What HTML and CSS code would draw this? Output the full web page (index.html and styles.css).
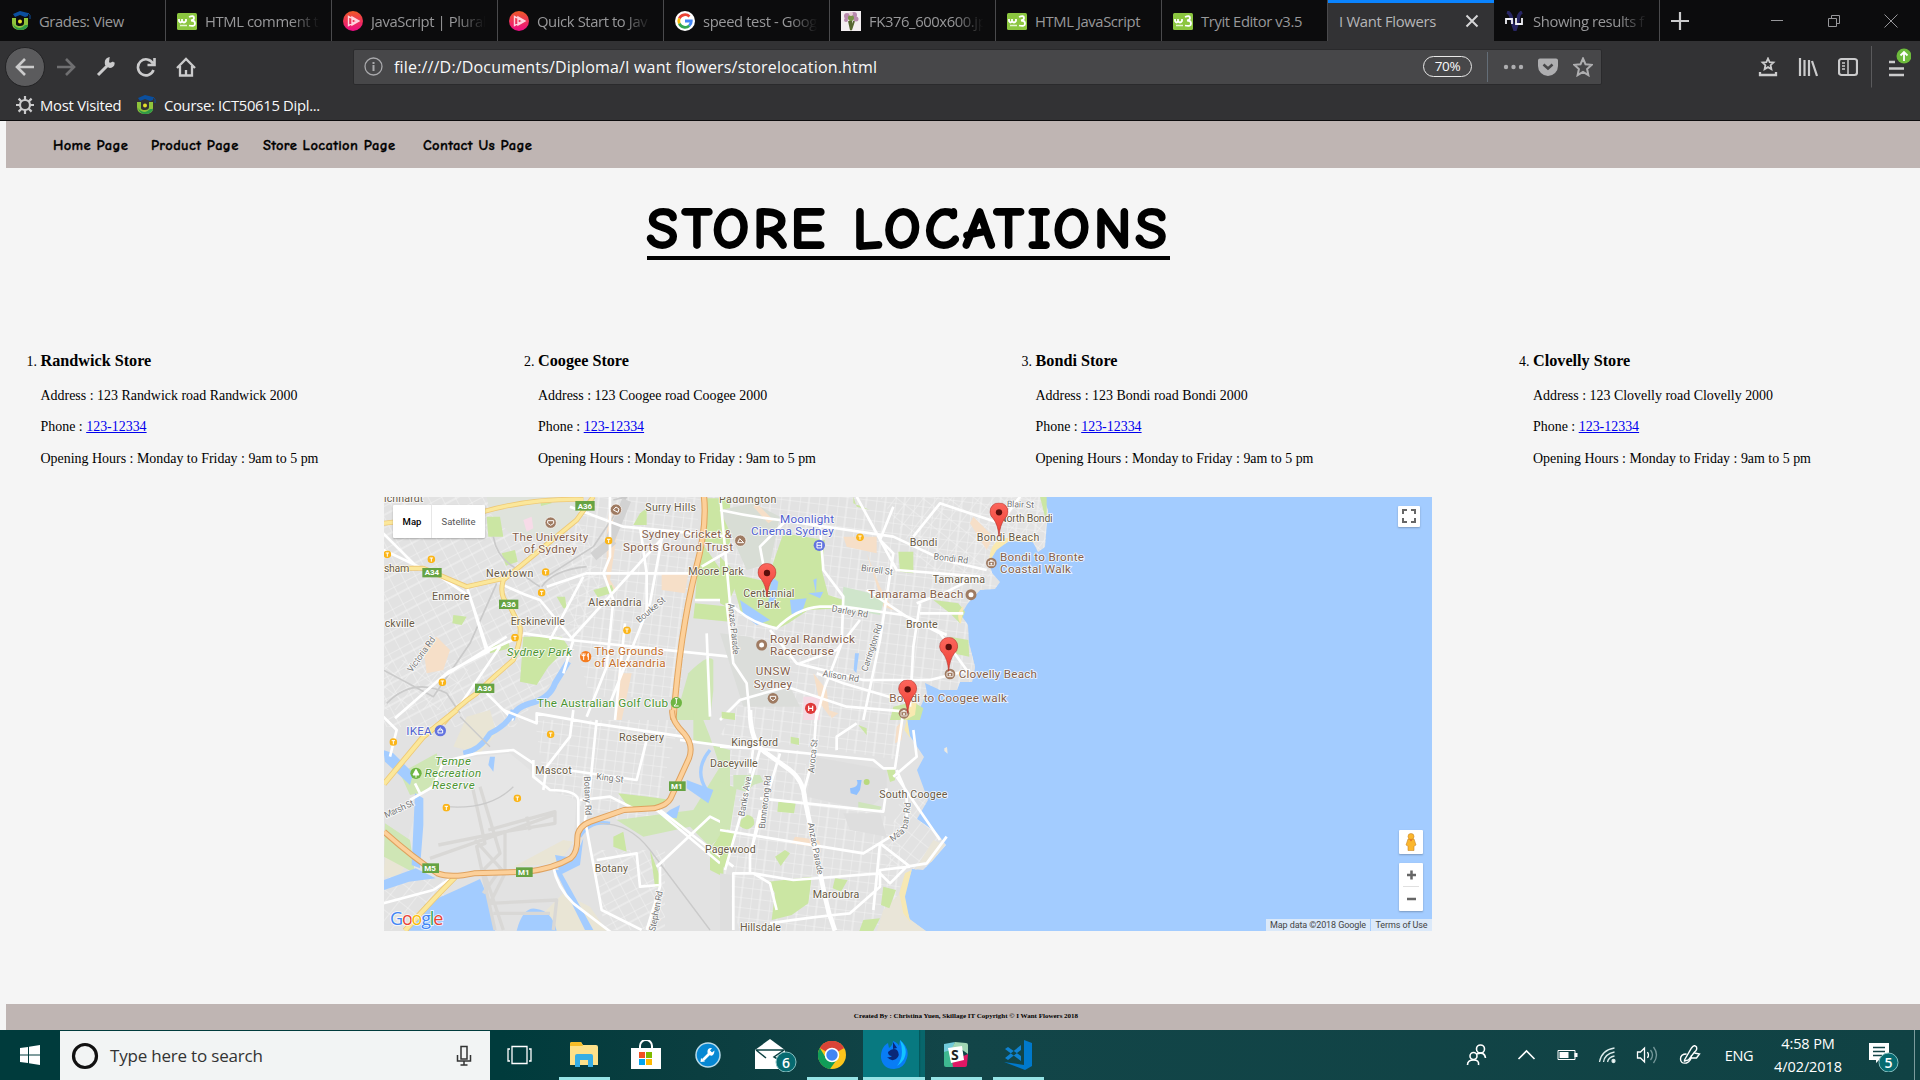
FILE: index.html
```html
<!DOCTYPE html>
<html lang="en">
<head>
<meta charset="utf-8">
<title>I Want Flowers</title>
<link rel="stylesheet" href="styles.css">
</head>
<body>
<svg class="defs" width="0" height="0">
  <symbol id="moodle" viewBox="0 0 20 20"><path d="M2 3 9 0l8 2v3l-3 1-5-2-5 2z" fill="#0b4f9e"/><path d="M17 2q3 2 2 6" stroke="#0b4f9e" fill="none"/><path d="M1 7h4v6q0 2 4 2 4 0 4-3V7h4v6q0 6-8 6-8 0-8-7z" fill="#8fc43b"/><path d="M2 13q2 6 7 6 7 0 8-5l-3 0q-3 3-5 3-4 0-7-4" fill="#2f9a48"/><circle cx="9" cy="10.500" r="2" fill="#e4df2b"/></symbol>
  <symbol id="w3" viewBox="0 0 20 20"><rect y="2" width="20" height="17" rx="1.500" fill="#8bc63f"/><path d="M2 8v2q2 3 3 0V8v2q2 3 4 0V8M12 6q5-2 5 1 0 2-3 2.500 4 0 4 3 0 3.500-6 2" fill="none" stroke="#fff" stroke-width="1.800"/><path d="M3 14.500h7" stroke="#e4f3d0" stroke-width="1.500"/></symbol>
  <linearGradient id="psg" x2="0" y2="1"><stop stop-color="#f05a28"/><stop offset="1" stop-color="#ed0b85"/></linearGradient>
  <symbol id="ps" viewBox="0 0 20 20"><circle cx="10" cy="10" r="10" fill="url(#psg)"/><path d="M5.500 5.500v9l8-4.500zM9 6v8l7-4z" fill="none" stroke="#ffd3df" stroke-width="1.400"/></symbol>
  <symbol id="goog" viewBox="0 0 20 20"><circle cx="10" cy="10" r="10" fill="#fff"/><g fill="none" stroke-width="2.800"><path d="M14.500 5.500A6.300 6.300 0 0 0 4.300 7.500" stroke="#ea4335"/><path d="M4.300 7.500a6.300 6.300 0 0 0 0 5" stroke="#fbbc05"/><path d="M4.300 12.500a6.300 6.300 0 0 0 10 2.200" stroke="#34a853"/><path d="M14.200 14.700A6 6 0 0 0 16.300 10H10" stroke="#4285f4"/></g></symbol>
  <symbol id="camera" viewBox="-18 -18 36 36"><circle r="16" fill="#9f7b62"/><rect x="-9" y="-5" width="18" height="13" rx="2" fill="none" stroke="#fff" stroke-width="2.500"/><circle cy="2" r="3" fill="#fff"/><path d="M-4-8h8" stroke="#fff" stroke-width="3"/></symbol>
  <symbol id="train" viewBox="-12 -12 24 24"><circle r="11.500" fill="#fbb518"/><path d="M-5-4H5M0-4V7" stroke="#fff" stroke-width="3"/></symbol>
  <linearGradient id="ping" x2="0" y2="1"><stop stop-color="#fb665c"/><stop offset="1" stop-color="#ee4035"/></linearGradient>
  <symbol id="pin" viewBox="-29 -29 58 104"><path d="M0 72Q-3 37-17 19A27 27 0 1 1 17 19Q3 37 0 72z" fill="url(#ping)" stroke="#b63a32" stroke-width="2"/><circle r="9.500" fill="#5a0f0c"/></symbol>
</svg>

<header class="browser">
  <div class="tabs">
    <div class="tab"><svg class="fav"><use href="#moodle"/></svg><span>Grades: View</span></div>
    <div class="tab fade"><svg class="fav"><use href="#w3"/></svg><span>HTML comment t</span></div>
    <div class="tab fade"><svg class="fav"><use href="#ps"/></svg><span>JavaScript | Plural</span></div>
    <div class="tab fade"><svg class="fav"><use href="#ps"/></svg><span>Quick Start to Jav</span></div>
    <div class="tab fade"><svg class="fav"><use href="#goog"/></svg><span>speed test - Goog</span></div>
    <div class="tab fade"><svg class="fav" viewBox="0 0 20 20"><path fill="#f3eef0" d="M0 0h20v20H0z"/><path d="M10 19 8 10m2 9 3-9m-3 9V9" stroke="#55652f" stroke-width="2"/><g fill="#b98aae"><circle cx="6" cy="5" r="3"/><circle cx="13" cy="4" r="3"/><circle cx="15" cy="8" r="2.500"/><circle cx="5" cy="9" r="2"/></g><circle cx="10" cy="7" r="3" fill="#7a9448"/><circle cx="10" cy="3" r="2" fill="#e9cdd7"/></svg><span>FK376_600x600.jp</span></div>
    <div class="tab"><svg class="fav"><use href="#w3"/></svg><span>HTML JavaScript</span></div>
    <div class="tab"><svg class="fav"><use href="#w3"/></svg><span>Tryit Editor v3.5</span></div>
    <div class="tab active"><span>I Want Flowers</span><svg width="14" height="14" viewBox="0 0 14 14"><path d="m1.500 1.500 11 11m0-11-11 11" stroke="#d5d5d6" stroke-width="2"/></svg></div>
    <div class="tab fade"><svg class="fav" viewBox="0 0 20 20"><path d="M2 1q4 1 5 9l3 9 3-9q0-7 4-9" fill="none" stroke="#272563" stroke-width="3.500"/><path d="M1 13V8h6v5m4-6v6h6V7" fill="none" stroke="#f0f0f6" stroke-width="1.800"/></svg><span>Showing results f</span></div>
    <svg class="plus" width="18" height="18" viewBox="0 0 18 18"><path d="M9 0v18M0 9h18" stroke="#cbcbcc" stroke-width="2.200"/></svg>
    <div class="window-buttons">
      <svg width="14" height="14"><path d="M1 6.500h12" stroke="#97979a"/></svg>
      <svg width="14" height="14" fill="none" stroke="#97979a"><path d="M1.500 4.500h8v8h-8zM4.500 4V1.500h8v8H10"/></svg>
      <svg width="14" height="14" stroke="#97979a"><path d="m.5.500 13 13m0-13-13 13"/></svg>
    </div>
  </div>

  <div class="toolbar">
    <div class="nav-buttons">
      <span class="back"><svg width="20" height="20" viewBox="0 0 20 20"><path d="M19 10H2m8-8-8 8 8 8"/></svg></span>
      <svg class="dim" width="20" height="20" viewBox="0 0 20 20"><path d="M1 10h17m-8-8 8 8-8 8"/></svg>
      <svg width="20" height="20" viewBox="0 0 20 20"><path d="m2 18 9-9" stroke-width="3"/><path d="M17.500 5.500 14 7l-2-1.500.5-4Q9 3 10 7.500q3 4 6.500 1.500 1.500-1 1-3.500" stroke-width="2" fill="#cbcbcc"/></svg>
      <svg width="20" height="20" viewBox="0 0 20 20"><path d="M17 6.500A8 8 0 1 0 17.500 13M18.500 1v7h-7"/></svg>
      <svg width="20" height="20" viewBox="0 0 20 20"><path d="m1 11 9-9 9 9M4 9v9.500h12V9M10 18v-5" stroke-width="2.300"/></svg>
    </div>
    <div class="url">
      <svg width="19" height="19" viewBox="0 0 19 19"><circle cx="9.500" cy="9.500" r="8.500" fill="none" stroke="#a9a9ac" stroke-width="1.300"/><path d="M9.500 8v6m0-9v2" stroke="#a9a9ac" stroke-width="2"/></svg>
      <span class="address">file:///D:/Documents/Diploma/I want flowers/storelocation.html</span>
      <span class="zoom">70%</span>
      <i class="sep"></i>
      <svg class="dots" width="21" height="20" fill="#aeaeb0"><circle cx="3" cy="10" r="2.200"/><circle cx="10.500" cy="10" r="2.200"/><circle cx="18" cy="10" r="2.200"/></svg>
      <svg width="20" height="20"><path d="M2 1.500h16a2 2 0 0 1 2 2V9a10 10 0 0 1-20 0V3.500a2 2 0 0 1 2-2z" fill="#aeaeb0"/><path d="m5.500 7.500 4.500 4 4.500-4" fill="none" stroke="#474749" stroke-width="2.500"/></svg>
      <svg width="20" height="20" viewBox="0 0 20 20"><path d="m10 1.500 2.500 5.700 6.200.6-4.600 4.200 1.300 6.200L10 15l-5.400 3.200L5.900 12 1.300 7.800l6.200-.6z" fill="none" stroke="#aeaeb0" stroke-width="2"/></svg>
    </div>
    <div class="tools">
      <svg width="20" height="20" viewBox="0 0 20 20"><path d="m10 1.500 1.600 3.600 3.900.4-2.900 2.700.8 3.900L10 10.100l-3.400 2 .8-3.900-2.900-2.700 3.900-.4z" stroke-width="1.800"/><path d="M2 15v3h16v-3" stroke-width="2.300"/></svg>
      <svg width="20" height="20" viewBox="0 0 20 20"><path d="M2 1v18M6.500 3v16M11 3v16m3-15 5 15" stroke-width="2.200"/></svg>
      <svg width="20" height="20" viewBox="0 0 20 20"><rect x="1" y="2" width="18" height="16" rx="2.500" stroke-width="2.200"/><path d="M10 2v16M4 6h3M4 9h3m-3 3h3" stroke-width="1.500"/></svg>
      <div class="menu"><svg width="24" height="34" viewBox="0 0 24 34"><path d="M2 15h6M2 21.500h15M2 28h15" stroke-width="2.500"/><circle cx="17" cy="9" r="7.500" fill="#6dbb3c" stroke="none"/><path d="M17 14V5m-3.500 3.500L17 5l3.500 3.500" stroke="#fff" stroke-width="1.800"/></svg></div>
    </div>
  </div>

  <div class="bookmarks">
    <svg width="18" height="18" viewBox="0 0 18 18"><circle cx="9" cy="9" r="5" fill="none" stroke="#cbcbcc" stroke-width="2.200"/><path d="M9 0v4m0 10v4M0 9h4m10 0h4M2.600 2.600l3 3m7 7 3 3m0-13-3 3m-7 7-3 3" stroke="#cbcbcc" stroke-width="2.200"/></svg>
    <span class="b1">Most Visited</span>
    <svg class="fav"><use href="#moodle"/></svg>
    <span class="b2">Course: ICT50615 Dipl...</span>
  </div>
</header>

<main class="page">
  <nav class="site-nav"><a class="n1">Home Page</a><a class="n2">Product Page</a><a class="n3">Store Location Page</a><a class="n4">Contact Us Page</a></nav>
  <h1><span>STORE LOCATIONS</span></h1>
  <ol class="stores">
    <li><h3>Randwick Store</h3><p>Address : 123 Randwick road Randwick 2000</p><p>Phone : <a href="#">123-12334</a></p><p>Opening Hours : Monday to Friday : 9am to 5 pm</p></li>
    <li><h3>Coogee Store</h3><p>Address : 123 Coogee road Coogee 2000</p><p>Phone : <a href="#">123-12334</a></p><p>Opening Hours : Monday to Friday : 9am to 5 pm</p></li>
    <li><h3>Bondi Store</h3><p>Address : 123 Bondi road Bondi 2000</p><p>Phone : <a href="#">123-12334</a></p><p>Opening Hours : Monday to Friday : 9am to 5 pm</p></li>
    <li><h3>Clovelly Store</h3><p>Address : 123 Clovelly road Clovelly 2000</p><p>Phone : <a href="#">123-12334</a></p><p>Opening Hours : Monday to Friday : 9am to 5 pm</p></li>
  </ol>

  <div class="map">
    <svg class="map-canvas" viewBox="384 497 1048 434">
      <defs>
        <pattern id="ga" width="19" height="10" patternUnits="userSpaceOnUse" patternTransform="rotate(7)"><path d="M0 0H19M0 0V10M9 0v10" stroke="#f3f3f3" stroke-width="1" fill="none"/></pattern>
        <pattern id="gb" width="12" height="19" patternUnits="userSpaceOnUse" patternTransform="rotate(-28)"><path d="M0 0H12M0 0V19M0 8h12" stroke="#f3f3f3" stroke-width="1" fill="none"/></pattern>
        <pattern id="gc" width="11" height="16" patternUnits="userSpaceOnUse" patternTransform="rotate(38)"><path d="M0 0H11M0 0V16" stroke="#f3f3f3" stroke-width="1" fill="none"/></pattern>
        <clipPath id="land"><path d="M384 497H1043L1048 510 1045 547 1038 552 1033 542 1010 541 997 548 989 562 992 573 1000 582 995 589 980 590 968 603 961 615 968 625 969 643 975 667 972 682 960 682 957 690 940 690 925 683 927 693 920 708 907 717 908 733 924 757 917 770 928 800 917 819 937 833 946 845 933 860 923 870 912 869 903 897 910 920 926 931H384z"/></clipPath>
      </defs>
      <rect x="384" y="497" width="1048" height="434" fill="#a3ccff"/>
      <g clip-path="url(#land)">
        <rect x="384" y="497" width="600" height="434" fill="#e2e2e2"/>
        <path d="M970 497h80v190h-80z" fill="#e3e3e3"/>
        <path d="M384 497h190l30 90-40 80-50 60H384z" fill="url(#gb)"/>
        <path d="M574 497h126l-20 200H590l-20-70zM535 720h145l-30 110-60-20-45-20z" fill="url(#ga)"/>
        <path d="M700 497h350v200l-150 20v43l-70-10-110-15 30-50z" fill="url(#ga)"/>
        <path d="M720 750h80l20 50 80 20v111H740l-20-60z" fill="url(#ga)"/>
        <path d="M880 497h170v80H930z" fill="url(#gc)"/>
        <path d="M900 800h50v70h-70zM384 710h60l30-50h-90zM384 870h60v60h-60z" fill="url(#gc)"/>
        <path d="M590 850h75v80h-60z" fill="url(#gb)"/>
      </g>

      <!-- north-west quarter, in thirds of a pixel -->
      <g transform="translate(380 490) scale(.33333)" fill="none" stroke-linejoin="round">
        <g fill="#f6dfc8"><path d="M130 470l40-30 40 40-20 60-50 10zM845 250h80l-10 60-70-10zM690 40l20 100-20 130 20 30-30-10V130zM715 550h40l-30 140h-20z"/></g>
        <path d="M320 20h290l-20 80-70 50-130-20-60-60z" fill="#dfe3dc"/>
        <g fill="#cbe6a3"><path d="M430 440h115l20 30-60 60-35 55-50-10z"/><path d="M320 80h40l10 60H325zM365 190l40-10 8 35-35 12zM220 375l40 5-15 25-28-5zM480 30l30-5 5 15-32 8zM640 300l55-15 8 22-50 15zM530 320h25l5 35h-10zM330 470l55-15 5 20-60 15zM980 25h70v140l-85-10zM960 150l90 130v50H945zM945 340l105 10v45l-110-10zM780 70l20-15v50h-40z"/></g>
        <path d="M925 550q60-60 75-40v90l-10 90H885z" fill="#cfe6b5"/>
        <path d="M430 90l25-10 5 35-20 10z" fill="#f7dbe8"/>
        <path d="M395 690q5-35 55-50 60-15 75-60l40-65" stroke="#a3ccff" stroke-width="18"/>
        <path d="M340 140q10 60 60 90 60 50 80 60M620 230q-100 10-135 60M700 30L740 20 640 170 500 260M10 540l150 80 110-160 80-180M20 640q80-80 180-30l40 60" stroke="#cacaca" stroke-width="5"/>
        <path d="M690 150l50-120M640 200l60-50" stroke="#d2d2d2" stroke-width="28"/>
        <g stroke="#fff" stroke-width="8"><path d="M10 180l170 80 90 60 50 165 110-50M10 130l110 110M260 290l65 195-120 60-160 140M430 430l140 20 480 50M570 450L860 130M500 290l120-40 320 0M360 280q60 30 120 50l100 120-30 100M190 560l190-120M230 660l130-190M570 50l160 60 320 30M690 20v180l-20 50 30 80-20 200-60 150M780 110l20 140v120M320 610l80 80M735 400l-30 290M610 260L510 450M850 120l-40 220-120 300M965 230l85-50M945 330h105M980 430l10 250"/></g>
        <g stroke="#eec976" stroke-width="15"><path d="M10 100l300-35Q450 25 610 28M640 20L590 90 370 270q-15 50 20 80l30 60q5 40-20 100-60 50-110 100-60 40-100 90M10 235h120l130 55 110-25"/></g>
        <g stroke="#fbe79b" stroke-width="10"><path d="M10 100l300-35Q450 25 610 28M640 20L590 90 370 270q-15 50 20 80l30 60q5 40-20 100-60 50-110 100-60 40-100 90M10 235h120l130 55 110-25"/></g>
        <path d="M972 20q10 90-25 220Q900 430 880 690" stroke="#e2a55f" stroke-width="19"/><path d="M972 20q10 90-25 220Q900 430 880 690" stroke="#fcd09a" stroke-width="13"/>
      </g>

      <!-- north-east quarter -->
      <g transform="translate(720 490) scale(.33333)" fill="none" stroke-linejoin="round">
        <path d="M0 60l100-20 80 40-30 140-70 20z" fill="#d8ddd5"/><path d="M110 40l50 50-15 10-45-50zM370 140h100v50l-90-20zM440 190l40 100 40 70-30-10zM760 80l60 60-20 40-50-80zM280 550l40 50 10 80-30-40z" fill="#f6dfc8"/>
        <path d="M190 130l125 20-10 90 20 75 45 15-5 25-100 5-60 40-30 15-110-40-25-90-40 35L30 250l110 25z" fill="#cbe6a3"/>
        <path d="M0 200l60 60-40 90L0 340zM535 185h45v65l-40-5zM400 20l10 30 40 10-50-20zM640 330l75 10 20 25-15 35-30-30zM690 440l55 10 3 50-50-10zM960 20h20v80zM520 650l60-15 30 20-10 35h-90z" fill="#cbe6a3"/>
        <path d="M370 290l125 30-15 55-115-20z" fill="#cfe5cb"/>
        <path d="M60 330l90 60-40 15-40-30zM210 330l50-5-15 45-30 2zM155 260l20 15-10 70-20-10zM280 270l10-5-2 45zM265 310l45-5-10 20zM405 490h12l-8 60-8-10z" fill="#a3ccff"/>
        <path d="M808 215q0-60 45-70l95-5-5 17-75-5-38 28zM720 400q-15-30 10-52l-2 20-5 32zM565 640l25-5-5 40-30 15z" fill="#f9e9b0"/>
        <path d="M0 430l90 10 120 70v80l30 60H70z" fill="#dbddda"/><path d="M250 620h50v70h-50z" fill="#f5d9e3"/>
        <g stroke="#fff" stroke-width="8"><path d="M0 60q90 20 180 30l340 50 150 70 130 30M0 10l30 330q60 60 140 75 60-60 130-65h70l180 25 130 60M140 280l-20-110 80-80M300 110l10 130 60 80-5 140-50 130-30 110M520 50l-40 100 40 40-40 260-50 240M20 340l20 180 40 60 10 110M150 420l80 100 200 50 200 0 120-30M580 140l80-100 180 60 60-80M600 340l-20 130-10 180M290 550l80 30 170 50M410 20l120 220 250 20M440 300l120 80 100 50 80 110M590 340l80-30 100-50M600 370h130M240 520l110-40 70-90M0 690l60-60 140-40 180 60 180 15"/></g>
      </g>

      <!-- south-west quarter -->
      <g transform="translate(380 710) scale(.33333)" fill="none" stroke-linejoin="round">
        <path d="M130 220l60-70 200-20 60 50 60 60 80 30-10 130-60 60-160 30-240 10-50-60z" fill="#e6e6e6"/>
        <path d="M15 440l60 30-20 30H10zM400 470l150-80 30 5-40 60-60 10zM490 610l60-60 80 40 50 72H500zM260 20l70-20 20 70-50 60-80-20z" fill="#e9e5d5"/>
        <path d="M15 340l75 50 15 100L12 440zM60 190l110-60 15 60-50 55-45 10zM940 0v90l110 30v230l-60 60-60-60-140 30-80-50 230-30 80-130-30-90-20-50z" fill="#cfe6b5"/>
        <path d="M700 380l30-15 10 60-40-15zM810 420l30 80v30h-15zM715 250l90 10 70 10-40 30-90-10zM990 420l40-60v140l-40-20z" fill="#cbe6a3"/>
        <path d="M75 662l60-80 100-45 65-30q30 60 45 155zM410 662q20-75 60-65 45 5 60 65zM10 120l30 10 60 60-10 35-75-70zM105 250l25 15v80l-10 130-25-10zM12 510l95-35 60 30-80 10-75 25zM920 210l80 30-15 40-65-45zM525 435l60 10 25-60-10 80-60 30zM870 300l30-15-10 40-45-5zM525 480l15 0 100 180h-25zM330 140l15 0-5 45-15-20z" fill="#a3ccff"/>
        <path d="M400 0q-10 40-70 70-30 50-80 60" stroke="#a3ccff" stroke-width="16"/><path d="M990 120q-50 60-10 120M600 380q30-50 90-40" stroke="#a3ccff" stroke-width="10"/>
        <g stroke="#d9d8d6" stroke-width="10"><path d="M150 445l370-130M175 405l200-40 150-25v-35l-200 55M275 220l40 180-25 10 55 250M300 230l60 200-50 50 60 180M285 390l90 100M375 360v130l-45 90 200-10-10 90M360 480l-50 70M440 320l10 40M340 610h170"/></g>
        <path d="M200 290q130 10 200-60M660 340q90 0 150 80l180 240M240 20l90 90" stroke="#cacaca" stroke-width="4"/>
        <g stroke="#fff" stroke-width="8"><path d="M370 0l100 40v-30l170 30 270 40M650 30l-20 200-15 100 30 160 20 110 120 60M460 150v50l50 40q80 0 85 30v90M290 130l110-10 60 40M90 270l70-40 30-75 100-25M600 270l90-10 80 40 60 0 190 160M840 300l220 170M830 470l160-150 60 30M650 450l120-20 10 100 60-5M580 0l-10 80-70 90-10 70M120 250l-15-30M520 470q10 60 60 110l130 100M840 470v60l-40 130M900 90l150 20M10 20l40 40-20 80M10 580l150-40 60-40M560 180l210 30 30-120"/></g>
        <path d="M75 662q80-90 150-160M12 222L130 80l100-80" stroke="#eec976" stroke-width="17"/><path d="M75 662q80-90 150-160M12 222L130 80l100-80" stroke="#fbe79b" stroke-width="12"/>
        <path d="M12 365q90 80 160 125 40 15 110 0l160-5q80-10 130-40 20-15 20-60 0-35 40-50l100-35 90-5q40-10 50-30l55-120q15-40-15-75-40-40-35-70" stroke="#dfa25f" stroke-width="18"/><path d="M12 365q90 80 160 125 40 15 110 0l160-5q80-10 130-40 20-15 20-60 0-35 40-50l100-35 90-5q40-10 50-30l55-120q15-40-15-75-40-40-35-70" stroke="#fcd09a" stroke-width="12"/>
      </g>

      <!-- south-east quarter -->
      <g transform="translate(720 710) scale(.33333)" fill="none" stroke-linejoin="round">
        <path d="M280 140l220 40v70l-60 50-180-40zM370 310l110 0 20 70-110-20zM0 490l35 5v170H0z" fill="#dedede"/>
        <path d="M640 390l35 15-40 50-50 25zM550 540l-60 60-20 65h150l-60-45z" fill="#e9e5d8"/><path d="M555 490l20-10-20 80 15 75-20-25-12-60zM553 60l8-35 10 60z" fill="#f6e8b4"/><path d="M673 115l8-4 2 20-10-8z" fill="#eeeae0"/>
        <path d="M225 380l70 10 10 25-90-15zM530 50l20-20-5 60-20 10zM325 0l30 10-20 15z" fill="#f6dfc8"/>
        <path d="M0 215l50 20-20 125-30-10z" fill="#cfe6b5"/>
        <path d="M0 355l45 10-30 110-15-10zM62 330l20-16q25 5 20 30-20 25-42 5zM175 275l52 5-5 30-50-5zM165 440l30-20 15 10-28 38zM145 515l130-15-10 80-50 35-60 15 10-80zM345 505l38 5-20 35-25-10zM490 530l38 10-20 55-25-10zM430 630l50-5-20 38h-42zM500 178l25-2v35l-15 5zM415 45l25 10v20zM5 5l40 5v20l-40-5zM212 80l25 5v20l-25-5z" fill="#cbe6a3"/>
        <path d="M415 275l70 15-10 15-60-5zM40 195l80 0 10 20-30 10-20 20-40-10z" fill="#cfe5bb"/><path d="M390 235q30-5 20-25l15 0-5 30-10 15-18-5z" fill="#8fc0ff"/><circle cx="440" cy="216" r="9" fill="#b9d97c"/>
        <g stroke="#fff" stroke-width="8"><path d="M0 110l110 5 350 35 30 25h35l25-170M290 0l-10 140-30 110M350 120V80l60-40M40 660V490h60l120 20 260-20 30 30 50-50 60-10 60-80M150 640q130-20 240-30l90-80v-50l90-10M0 360l430 70 130-80V250l-30-70M120 265l370 40 10-70M90 490l0-60 90-300M170 600l-20-80-50-30M90 440L120 300M480 400l-20 200M480 400l90 70M15 480l60-210 45-150M90 190l10-80M530 200l130 190M580 60l10 80-70 60"/></g>
        <path d="M90 0q0 100 50 130l70 50q40 30 45 90l60 290q10 50 30 102" stroke="#fff" stroke-width="14"/>
      </g>

      <!-- labels -->
      <g class="labels" transform="translate(380 490) scale(.33333)">
        <text x="12" y="37" textLength="118">ichhardt</text><text x="318" y="262" textLength="142">Newtown</text><text x="156" y="330" textLength="112">Enmore</text><text x="12" y="246" textLength="76">sham</text><text x="14" y="411" textLength="90">ckville</text><text x="392" y="405" textLength="163">Erskineville</text><text x="625" y="349" textLength="160">Alexandria</text><text x="796" y="63" textLength="152">Surry Hills</text><text x="925" y="254" textLength="166">Moore Park</text>
        <g class="poi"><text x="397" y="152" textLength="228">The University</text><text x="431" y="189" textLength="160">of Sydney</text><text x="785" y="145" textLength="270">Sydney Cricket &amp;</text><text x="729" y="182" textLength="330">Sports Ground Trust</text></g>
        <g class="food"><text x="643" y="494" textLength="208">The Grounds</text><text x="643" y="531" textLength="214">of Alexandria</text></g>
        <g class="green"><text class="it" x="380" y="498" textLength="196">Sydney Park</text><text x="471" y="651" textLength="393">The Australian Golf Club</text></g>
        <g class="road"><text transform="translate(95 548) rotate(-54)" textLength="123">Victoria Rd</text><text transform="translate(778 400) rotate(-40)" textLength="105">Bourke St</text></g>
        <g fill="#9f7b62" stroke="#fff" stroke-width="2"><circle cx="512" cy="98" r="17"/><circle cx="708" cy="59" r="17"/><circle cx="1081" cy="152" r="17"/></g><path d="M503 92h18v8l-9 6-9-6zM700 60l8-9 9 6-3 10zM1073 158l6-12 12 12z" fill="none" stroke="#fff" stroke-width="3"/>
        <circle cx="617" cy="500" r="17" fill="#f57c1f"/><path d="M611 490v20m-5-20v7h9v-7m10 0v20m0-20q-6 6 0 12" stroke="#fff" stroke-width="3" fill="none"/>
        <circle cx="889" cy="638" r="17" fill="#6eb543"/><path d="M885 626h8m-4 0v14l-7 8h14" stroke="#fff" stroke-width="3" fill="none"/>
        <use href="#train" x="10" y="181" width="24" height="24"/><use href="#train" x="142" y="196" width="24" height="24"/><use href="#train" x="485" y="234" width="24" height="24"/><use href="#train" x="473" y="296" width="24" height="24"/><use href="#train" x="674" y="140" width="24" height="24"/><use href="#train" x="729" y="409" width="24" height="24"/><use href="#train" x="393" y="431" width="24" height="24"/><use href="#train" x="175" y="565" width="24" height="24"/>
        <g class="shield"><rect x="586" y="33" width="58" height="29"/><rect x="127" y="234" width="58" height="28"/><rect x="357" y="329" width="58" height="28"/><rect x="285" y="581" width="58" height="28"/><text x="593" y="56">A36</text><text x="134" y="256">A34</text><text x="364" y="351">A36</text><text x="292" y="603">A36</text></g>
      </g>
      <g class="labels" transform="translate(720 490) scale(.33333)">
        <text x="-3" y="38" textLength="172">Paddington</text><text x="569" y="168" textLength="83">Bondi</text><text x="838" y="95" textLength="160">North Bondi</text><text x="770" y="152" textLength="188">Bondi Beach</text><text x="638" y="280" textLength="157">Tamarama</text><text x="558" y="414" textLength="95">Bronte</text><text x="70" y="320" textLength="153">Centennial</text><text x="112" y="353" textLength="66">Park</text>
        <g class="violet"><text x="180" y="98" textLength="162">Moonlight</text><text x="93" y="135" textLength="248">Cinema Sydney</text></g>
        <g class="poi"><text x="840" y="212" textLength="252">Bondi to Bronte</text><text x="840" y="249" textLength="213">Coastal Walk</text><text x="445" y="325" textLength="285">Tamarama Beach</text><text x="150" y="458" textLength="255">Royal Randwick</text><text x="150" y="495" textLength="192">Racecourse</text><text x="107" y="556" textLength="104">UNSW</text><text x="101" y="593" textLength="115">Sydney</text><text x="716" y="563" textLength="235">Clovelly Beach</text><text x="508" y="637" textLength="353">Bondi to Coogee walk</text></g>
        <g class="road"><text transform="translate(860 51) rotate(2)" textLength="82">Blair St</text><text transform="translate(640 208) rotate(7)" textLength="104">Bondi Rd</text><text transform="translate(422 242) rotate(8)" textLength="96">Birrell St</text><text transform="translate(334 364) rotate(10)" textLength="110">Darley Rd</text><text transform="translate(307 559) rotate(9)" textLength="110">Alison Rd</text><text transform="translate(441 546) rotate(-72)" textLength="148">Carrington Rd</text><text transform="translate(24 341) rotate(84)" textLength="154">Anzac Parade</text></g>
        <circle cx="298" cy="166" r="17" fill="#6273df"/><path d="M291 158h14v16h-14zm0 8h14" stroke="#fff" stroke-width="3" fill="none"/>
        <g fill="#fff" stroke="#9f7b62" stroke-width="9"><circle cx="753" cy="314" r="12"/><circle cx="125" cy="465" r="12"/></g><circle cx="159" cy="625" r="16" fill="#9f7b62"/><path d="M151 619h16v7l-8 6-8-6z" fill="none" stroke="#fff" stroke-width="3"/>
        <circle cx="272" cy="655" r="17" fill="#df3939"/><path d="M266 647v16m12-16v16m-12-8h12" stroke="#fff" stroke-width="3.500"/>
        <use href="#camera" x="796" y="201" width="36" height="36"/><use href="#camera" x="672" y="534" width="36" height="36"/><use href="#camera" x="534" y="652" width="36" height="36"/><use href="#train" x="408" y="130" width="24" height="24"/>
        <use href="#pin" x="808" y="38" width="58" height="104"/><use href="#pin" x="112" y="220" width="58" height="104"/><use href="#pin" x="657" y="442" width="58" height="104"/><use href="#pin" x="534" y="569" width="58" height="104"/>
      </g>
      <g class="labels" transform="translate(380 710) scale(.33333)">
        <text x="717" y="92" textLength="135">Rosebery</text><text x="466" y="191" textLength="109">Mascot</text><text x="644" y="485" textLength="100">Botany</text><text x="975" y="430" textLength="152">Pagewood</text><text x="990" y="170" textLength="143">Daceyville</text>
        <text class="violet" x="79" y="74" textLength="76">IKEA</text><circle cx="181" cy="62" r="17" fill="#6273df"/><path d="M174 60h14v9h-14zm3 0q4-12 8 0" stroke="#fff" stroke-width="3" fill="none"/>
        <g class="green it"><text x="165" y="164" textLength="108">Tempe</text><text x="134" y="201" textLength="170">Recreation</text><text x="156" y="238" textLength="128">Reserve</text></g><circle cx="108" cy="190" r="17" fill="#6eb543"/><path d="m108 178 9 17H99zM108 193v10" fill="#fff" stroke="#fff" stroke-width="3"/>
        <g class="road"><text transform="translate(18 325) rotate(-25)" textLength="94">Marsh St</text><text transform="translate(648 208) rotate(7)" textLength="82">King St</text><text transform="translate(612 199) rotate(88)" textLength="117">Botany Rd</text><text transform="translate(825 665) rotate(-79)" textLength="123">Stephen Rd</text></g>
        <use href="#train" x="28" y="84" width="24" height="24"/><use href="#train" x="500" y="61" width="24" height="24"/><use href="#train" x="400" y="253" width="24" height="24"/><use href="#train" x="187" y="281" width="24" height="24"/>
        <g class="shield"><rect x="867" y="214" width="50" height="29"/><rect x="127" y="460" width="50" height="29"/><rect x="408" y="472" width="50" height="29"/><text x="873" y="237">M1</text><text x="133" y="483">M5</text><text x="414" y="495">M1</text></g>
        <text class="google" x="30" y="645" textLength="160"><tspan fill="#4285f4">G</tspan><tspan fill="#ea4335">o</tspan><tspan fill="#fbbc05">o</tspan><tspan fill="#4285f4">g</tspan><tspan fill="#34a853">l</tspan><tspan fill="#ea4335">e</tspan></text>
      </g>
      <g class="labels" transform="translate(720 710) scale(.33333)">
        <text x="34" y="108" textLength="140">Kingsford</text><text x="478" y="263" textLength="204">South Coogee</text><text x="278" y="564" textLength="140">Maroubra</text><text x="60" y="664" textLength="123">Hillsdale</text>
        <g class="road"><text transform="translate(282 190) rotate(-84)" textLength="102">Avoca St</text><text transform="translate(73 320) rotate(-80)" textLength="121">Banks Ave</text><text transform="translate(134 357) rotate(-83)" textLength="160">Bunnerong Rd</text><text transform="translate(263 340) rotate(79)" textLength="158">Anzac Parade</text><text transform="translate(518 396) rotate(-38)" textLength="47">Mala</text><text transform="translate(562 358) rotate(-82)" textLength="80">bar Rd</text></g>
      </g>
    </svg>
    <div class="map-type"><b>Map</b><span>Satellite</span></div>
    <div class="fullscreen"><svg width="14" height="14"><path d="M1 5V1h4m4 0h4v4m0 4v4H9m-4 0H1V9" fill="none" stroke="#666" stroke-width="2"/></svg></div>
    <div class="pegman"><svg width="12" height="18" viewBox="0 0 12 18"><path d="M3 6h6l2 6-2 1v4.500H3V13l-2-1z" fill="#fbb62c" stroke="#c9882b" stroke-width=".6"/><circle cx="6" cy="3.500" r="3" fill="#fbb62c" stroke="#c9882b" stroke-width=".6"/><path d="m4.500 6.500 1.500 2 1.500-2" fill="#e06f2a"/></svg></div>
    <div class="zoomer"><svg width="24" height="48"><path d="M8 12h9M12.500 7.500v9M8 36h9" stroke="#666" stroke-width="2.500"/><path d="M4 23.500h16" stroke="#e0e0e0"/></svg></div>
    <div class="credits"><span>Map data ©2018 Google</span><span>Terms of Use</span></div>
  </div>

  <footer>Created By : Christina Yuen, Skillage IT Copyright © I Want Flowers 2018</footer>
</main>

<div class="taskbar">
  <div class="start"><svg width="20" height="20"><path d="M0 3 8 2v7.500H0zM9 1.800 20 0v9.500H9zM0 10.500h8V18l-8-1zM9 10.500h11V20L9 18.300z" fill="#fff"/></svg></div>
  <div class="search"><svg width="28" height="28"><circle cx="14" cy="14" r="11.500" fill="none" stroke="#111" stroke-width="3.200"/></svg><span>Type here to search</span><svg class="mic" width="16" height="22" fill="none" stroke="#333" stroke-width="1.500"><path d="M5 1.500h6V14H5zM1.500 10v6h13v-6M8 16v4m-3.500 0h7"/></svg></div>
  <div class="task view"><svg width="26" height="20" fill="none" stroke="#fff" stroke-width="1.300"><path d="M5 1.500h15v17H5zM3 4H1v12h2M22 4h2v12h-2"/></svg></div>
  <div class="task open"><svg width="28" height="26"><path d="M0 2q0-2 2-2h9l2 3h13q2 0 2 2v18H0z" fill="#fee189"/><path d="M0 2q0-2 2-2h9l2 4H0z" fill="#f6bd27"/><path d="M5 25V14q0-2 2-2h14q2 0 2 2v11h-5v-7h-8v7z" fill="#37aee5"/></svg></div>
  <div class="task"><svg width="30" height="30"><path d="M9 9V6a6 6 0 0 1 12 0v3" fill="none" stroke="#fff" stroke-width="2"/><path d="M0 8h30v21H0z" fill="#fff"/><path d="M8 12h6v6H8z" fill="#f25022"/><path d="M15 12h6v6h-6z" fill="#7fba00"/><path d="M8 19h6v6H8z" fill="#00a4ef"/><path d="M15 19h6v6h-6z" fill="#ffb900"/></svg></div>
  <div class="task"><svg width="26" height="26"><circle cx="13" cy="13" r="12" fill="#0788d3" stroke="#b8dbe9" stroke-width="1.500"/><path d="m8 18 8-8" stroke="#fff" stroke-width="2.600"/><path d="M19.500 8.500 17 10.500l-2-2 2-2.500q-4-.5-4.500 3t3 4.500 4-5zM6 16l-.5 4 4.500-.5" fill="#fff"/></svg></div>
  <div class="task mail"><svg width="42" height="34" viewBox="0 0 42 34"><path d="M0 12 15 1l15 11v19H0z" fill="#fff"/><path d="M1 12h28l-10 7 10 6M1 12l10 8" fill="none" stroke="#0d4143" stroke-width="1.500"/><circle cx="31" cy="24" r="10" fill="#066a70" stroke="#86bfc0"/></svg><b class="badge">6</b></div>
  <div class="task open"><svg width="28" height="28" viewBox="-14 -14 28 28"><circle r="14" fill="#fbc51c"/><path d="M0 0-12.200-7A14 14 0 0 1 12.200-7z" fill="#db4437"/><path d="M-12.200-7A14 14 0 0 0-2 14L6 3-6 3z" fill="#119d58"/><circle r="6.500" fill="#4285f4" stroke="#fff" stroke-width="1.600"/></svg></div>
  <div class="task open current"><svg width="28" height="30"><path d="M14 29C2 29-1 18 2 10q2-5 6-7l1 5q4-3 4-7 5 2 6 5l1-6q10 8 7 18-3 11-13 11" fill="#087df5"/><path d="M20 0q9 9 4 19-3 5-7 7 8-10 3-26" fill="#13c4ff"/><path d="M8 12q5-5 9-2 4 5-1 9-5 3-9-2 3 1 5-1-4 0-4-4M13 2l4 6-4 1z" fill="#0a2878"/></svg></div>
  <div class="task open"><svg width="24" height="26"><path d="M0 2 11 0l-3 8-8 3z" fill="#70cadb"/><path d="m11 0 11 1q2 0 2 2v9l-7-5-9-1z" fill="#a0d6b4"/><path d="m0 10 7-2 4 17H2q-2 0-2-2z" fill="#3eb890"/><path d="m24 12-1 11q0 2-2 2H9l-1-7 9-3z" fill="#e01765"/><path d="m4 6 14-2 2 14-13 3z" fill="#fff"/></svg><b class="s">S</b></div>
  <div class="task open"><svg width="28" height="30"><path d="m20 0 8 3v23l-7 4L0 22l20 3z" fill="#0079cc"/><path d="M17 5 1 18l3 2L17 10zM17 21 1 9l3-2 13 9z" fill="#0f82d2"/></svg></div>

  <div class="tray">
    <svg width="40" height="24" fill="none" stroke="#fff" stroke-width="1.600"><circle cx="24" cy="6" r="4"/><circle cx="17" cy="13" r="3.500"/><path d="M20 11q8-3 9 4M11 22q0-5 6-5t5 5"/></svg>
    <svg class="chev" width="40" height="24" fill="none" stroke="#fff" stroke-width="1.600"><path d="m12 16 8-8 8 8"/></svg>
    <svg width="40" height="24"><path d="M11.500 7.500h17v9h-17z" fill="none" stroke="#fff"/><path d="M13 9h9v6h-9zM28 10h3v4h-3z" fill="#fff"/></svg>
    <svg width="41" height="24" fill="none" stroke="#dcebeb" stroke-width="1.300"><path d="M13 19Q15 7 28 5M17 19q1-8 11-10M21 19q1-5 7-6"/><circle cx="27" cy="18" r="1.500" fill="#fff"/></svg>
    <svg width="40" height="24" fill="none" stroke="#fff" stroke-width="1.300"><path d="M10 9h3l4-4v14l-4-4h-3zM20 9q2 3 0 6"/><path d="M23 7q4 5 0 10m3-13q6 8 0 16" stroke="#76989a"/></svg>
    <svg width="46" height="24" fill="none" stroke="#fff" stroke-width="1.400"><path d="M19 11q-6 0-6 5 0 5 6 4 5-2 5-8M17 17l7-12q3-4 5-1 1 3-2 5l-6 8-4 1zM27 10l5 1-3 4-5 0"/></svg>
    <span class="lang">ENG</span>
    <div class="clock"><span>4:58 PM</span><span>4/02/2018</span></div>
    <div class="action"><svg width="34" height="34"><path d="M3 5h20v17H13l-3 3v-3H3z" fill="#fff"/><path d="M7 9.500h12M7 13.500h12M7 17.500h9" stroke="#134447" stroke-width="1.300"/><circle cx="22.500" cy="24.500" r="9.500" fill="#066a70" stroke="#86bfc0"/></svg><b class="badge">5</b></div>
    <i class="desk"></i>
  </div>
</div>
</body>
</html>
```

FILE: styles.css
```css
* { box-sizing: border-box; }
body { margin: 0; width: 1920px; height: 1080px; overflow: hidden; display: flex; flex-direction: column; background: #f5f5f5; font-family: "Liberation Serif", serif; }
svg { display: block; flex: none; }
.defs { position: absolute; }
.fav { width: 20px; height: 20px; flex: none; }

/* browser chrome */
.browser { height: 121px; flex: none; background: #323234; border-bottom: 1px solid #0c0c0d; font-family: "Open Sans", sans-serif; color: #f9f9fa; }
.tabs { display: flex; height: 41px; background: #0c0c0d; align-items: center; }
.tab { width: 166px; height: 41px; display: flex; align-items: center; gap: 8px; padding: 0 4px 0 11px; border-right: 1px solid #4a4a4c; font-size: 14.8px; letter-spacing: -.4px; color: #98989a; white-space: nowrap; }
.tab span { flex: 1; }
.tab.fade span { -webkit-mask-image: linear-gradient(90deg, #000 70%, transparent 94%); }
.tab.active { background: #323234; border-top: 3px solid #0a84ff; color: #b6b6b8; padding: 0 15px 3px 11px; border-right: 0; letter-spacing: -.3px; }
.plus { margin-left: 11px; }
.window-buttons { margin-left: auto; display: flex; gap: 43px; padding-right: 22px; }
.toolbar { height: 51px; display: flex; align-items: center; }
.nav-buttons, .tools { display: flex; align-items: center; fill: none; stroke: #cbcbcc; stroke-width: 2.6px; }
.nav-buttons { width: 353px; gap: 20px; padding-left: 5px; }
.back { width: 40px; height: 40px; border-radius: 50%; background: #5b5b5d; border: 1px solid #232325; display: grid; place-items: center; margin-right: -9px; }
.dim { opacity: .4; }
.url { width: 1249px; height: 36px; display: flex; align-items: center; background: #474749; border: 1px solid #2a2a2c; border-radius: 2px; padding: 0 8px 0 10px; }
.address { font-size: 16px; margin-left: 11px; letter-spacing: .17px; }
.zoom { margin-left: auto; width: 49px; height: 21px; border: 1px solid #e8e8e8; border-radius: 11px; font-size: 13.5px; line-height: 19px; text-align: center; letter-spacing: -.4px; }
.sep { width: 1px; height: 30px; background: #646e78; margin: 0 15px; }
.dots { margin-right: 14px; }
.url svg:last-child { margin-left: 15px; }
.tools { margin-left: auto; gap: 20px; }
.menu { width: 62px; height: 42px; border-left: 1px solid #5a5a5c; padding: 1px 0 0 15px; margin: 0 -13px 0 -7px; clip-path: inset(0 14px 0 0); }
.browser { overflow: hidden; }
.bookmarks { height: 26px; display: flex; align-items: center; padding-left: 16px; font-size: 14.8px; }
.b1 { width: 88px; margin: 0 8px 0 6px; letter-spacing: -.25px; white-space: nowrap; }
.bookmarks .fav { margin: 0 8px 0 0; }
.b2 { letter-spacing: -.3px; }

/* site */
.page { flex: 1; display: flex; flex-direction: column; }
.site-nav { height: 47px; flex: none; margin-left: 6px; padding-left: 47px; display: flex; align-items: center; background: #bfb5b3; font: bold 14.5px "Comic Sans MS", "Comic Neue", "Noto Sans", sans-serif; letter-spacing: .35px; -webkit-text-stroke: .3px #000; }
.site-nav a { white-space: nowrap; padding-top: 2px; }
.n1 { width: 98px; } .n2 { width: 112px; } .n3 { width: 160px; }
h1 { width: 1817px; height: 104px; margin: 27px 0 0; text-align: center; font: bold 58px/70px "Comic Sans MS", "Comic Neue", "Noto Sans", sans-serif; letter-spacing: 3.6px; }
h1 span { display: inline-block; border-bottom: 4px solid #000; line-height: 65px; height: 63px; -webkit-text-stroke: 1.8px #000; }
.stores { display: grid; grid-template-columns: repeat(3, 497.5px) 1fr; margin: 53px 0 0; padding: 0 0 0 40.5px; height: 145px; font-size: 13.95px; }
.stores h3 { font-size: 16.2px; margin: 0 0 17.5px; line-height: 18px; }
.stores p { margin: 0 0 15.6px; line-height: 16px; }
.stores a { color: #00e; }
.map { position: relative; width: 1048px; height: 434px; margin-left: 384px; flex: none; overflow: hidden; font-family: Roboto, sans-serif; }
.map-canvas { width: 1048px; height: 434px; }
.labels { font: 500 32px Roboto, sans-serif; fill: #695a45; stroke: #fff; stroke-width: 0; }
.labels text { paint-order: stroke; stroke: #fff; stroke-opacity: .85; stroke-width: 5px; font-weight: 400; }
.labels .poi { fill: #865f4b; font-size: 35px; }
.labels .food { fill: #c4702c; font-size: 35px; }
.labels .green { fill: #4c9432; font-size: 35px; }
.labels .violet { fill: #5060cf; font-size: 35px; }
.labels .it { font-style: italic; }
.labels .road { fill: #777; font-size: 27px; }
.labels .shield { fill: #66a343; }
.labels .shield text { font-size: 24px; font-weight: 700; fill: #fff; stroke: none; }
.labels .google { font: 54px "Open Sans", sans-serif; stroke: #fff; }
.map-type, .fullscreen, .pegman, .zoomer { position: absolute; background: #fff; border-radius: 1px; box-shadow: 0 1px 2px rgba(0,0,0,.25); }
.map-type { left: 9px; top: 8px; height: 33px; display: flex; align-items: center; font-size: 9.5px; }
.map-type b { width: 38px; text-align: center; font-weight: 500; color: #000; }
.map-type span { width: 54px; text-align: center; border-left: 1px solid #e7e7e7; line-height: 33px; color: #565656; }
.fullscreen { left: 1014px; top: 9px; width: 22px; height: 21px; padding: 3px 4px; }
.pegman { left: 1015px; top: 333px; width: 24px; height: 24px; padding: 3px 6px; }
.zoomer { left: 1015px; top: 366px; width: 24px; height: 48px; }
.credits { position: absolute; right: 0; bottom: 0; display: flex; gap: 1px; font-size: 9px; line-height: 12px; color: #444; white-space: nowrap; }
.credits span { background: #dbe9f9; text-align: center; width: 61px; letter-spacing: -.1px; }
.credits span:first-child { width: 104px; letter-spacing: -.1px; }
footer { margin: auto 0 0 6px; height: 26px; background: #bfb5b3; text-align: center; font-size: 7px; font-weight: bold; line-height: 24px; padding-left: 6px; }

/* taskbar */
.taskbar { height: 50px; flex: none; display: flex; background: linear-gradient(90deg, #003b3c 500px, #0b3e40 700px, #124548 950px, #104244); font-family: "Open Sans", sans-serif; color: #fff; }
.start { width: 60px; display: grid; place-items: center; }
.search { width: 430px; background: #f2f4f4; margin-top: 1px; display: flex; align-items: center; padding: 0 18px 0 11px; color: #333; font-size: 17px; letter-spacing: -.2px; }
.search span { margin-left: 11px; }
.mic { margin-left: auto; }
.task { width: 62px; position: relative; display: grid; place-items: center; }
.view { width: 60px; margin-right: 3px; }
.mail { padding-left: 12px; }
.open::after { content: ""; position: absolute; bottom: 0; left: 6px; width: 51px; height: 3px; background: #96e4e6; }
.current { background: linear-gradient(90deg, #087980 56px, #045457 56px, #08666b 58px); }
.current::after { left: 0; width: 62px; }
.badge { position: absolute; font-size: 14px; font-weight: 600; }
.task .badge { left: 43px; top: 23px; }
.s { position: absolute; font: bold 14px "Open Sans", sans-serif; color: #222; top: 15px; left: 26px; }
.tray { margin-left: auto; display: flex; align-items: center; letter-spacing: -.3px; }
.chev { margin-left: 10px; }
.tray > svg { transform: translateX(1.5px); }
.lang { width: 54px; text-align: center; font-size: 14.5px; letter-spacing: -.4px; }
.clock { width: 84px; display: flex; flex-direction: column; align-items: center; font-size: 14.5px; line-height: 22.5px; padding-top: 1px; letter-spacing: -.1px; }
.action { position: relative; width: 64px; padding-left: 16px; }
.action .badge { left: 34.500px; top: 15px; }
.desk { width: 6px; height: 50px; border-left: 1px solid #7b9b9c; }
```
